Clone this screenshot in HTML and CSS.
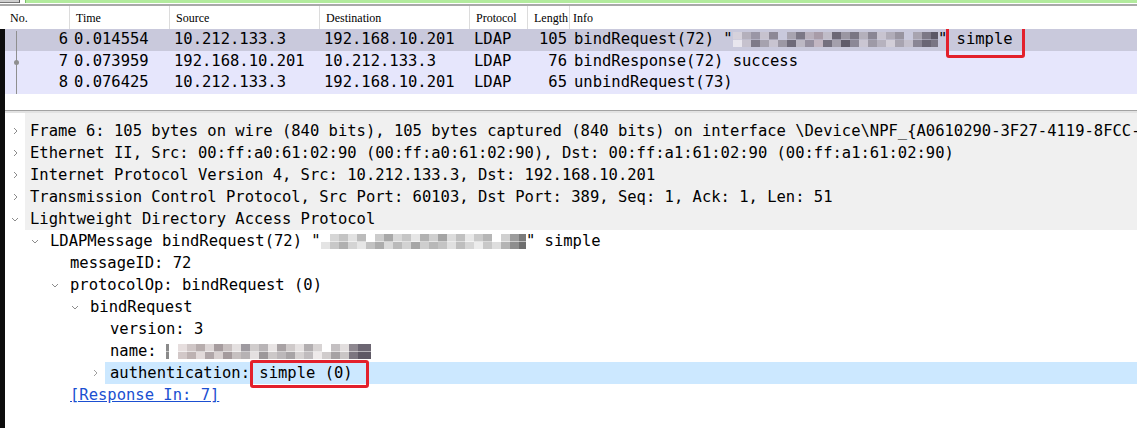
FILE: index.html
```html
<!DOCTYPE html>
<html>
<head>
<meta charset="utf-8">
<title>Wireshark LDAP</title>
<link rel="stylesheet" href="styles.css">
</head>
<body>
<div class="filterbar"><span class="fb-btn"></span><span class="fb-input"></span></div>
<div class="phead">
  <div class="hc">No.</div>
  <div class="hc">Time</div>
  <div class="hc">Source</div>
  <div class="hc">Destination</div>
  <div class="hc">Protocol</div>
  <div class="hc">Length</div>
  <div class="hc last">Info</div>
</div>
<div class="main">
  <div class="plist">
    <div class="prow sel">
      <span class="c-no">6</span><span class="c-time">0.014554</span><span class="c-src">10.212.133.3</span><span class="c-dst">192.168.10.201</span><span class="c-proto">LDAP</span><span class="c-len">105</span><span class="c-info">bindRequest(72) "<span class="redact r1"></span>" <span class="hl hl-a">simple</span></span>
    </div>
    <div class="prow">
      <span class="c-no">7</span><span class="c-time">0.073959</span><span class="c-src">192.168.10.201</span><span class="c-dst">10.212.133.3</span><span class="c-proto">LDAP</span><span class="c-len">76</span><span class="c-info">bindResponse(72) success</span>
    </div>
    <div class="prow">
      <span class="c-no">8</span><span class="c-time">0.076425</span><span class="c-src">10.212.133.3</span><span class="c-dst">192.168.10.201</span><span class="c-proto">LDAP</span><span class="c-len">65</span><span class="c-info">unbindRequest(73)</span>
    </div>
    <div class="relline"><span class="reldot"></span></div>
  </div>
  <div class="splitter"></div>
  <div class="tree">
    <div class="tgroup">
      <div class="trow l0"><span class="br"><span class="tog"><svg width="8" height="8" viewBox="0 0 8 8"><polyline points="3,1 6,4 3,7" fill="none" stroke="#8c8c8c" stroke-width="1"/></svg></span></span><span class="item">Frame 6: 105 bytes on wire (840 bits), 105 bytes captured (840 bits) on interface \Device\NPF_{A0610290-3F27-4119-8FCC-</span></div>
      <div class="trow l0"><span class="br"><span class="tog"><svg width="8" height="8" viewBox="0 0 8 8"><polyline points="3,1 6,4 3,7" fill="none" stroke="#8c8c8c" stroke-width="1"/></svg></span></span><span class="item">Ethernet II, Src: 00:ff:a0:61:02:90 (00:ff:a0:61:02:90), Dst: 00:ff:a1:61:02:90 (00:ff:a1:61:02:90)</span></div>
      <div class="trow l0"><span class="br"><span class="tog"><svg width="8" height="8" viewBox="0 0 8 8"><polyline points="3,1 6,4 3,7" fill="none" stroke="#8c8c8c" stroke-width="1"/></svg></span></span><span class="item">Internet Protocol Version 4, Src: 10.212.133.3, Dst: 192.168.10.201</span></div>
      <div class="trow l0"><span class="br"><span class="tog"><svg width="8" height="8" viewBox="0 0 8 8"><polyline points="3,1 6,4 3,7" fill="none" stroke="#8c8c8c" stroke-width="1"/></svg></span></span><span class="item">Transmission Control Protocol, Src Port: 60103, Dst Port: 389, Seq: 1, Ack: 1, Len: 51</span></div>
      <div class="trow l0"><span class="br"><span class="tog"><svg width="8" height="8" viewBox="0 0 8 8"><polyline points="1,3 4,6 7,3" fill="none" stroke="#8c8c8c" stroke-width="1"/></svg></span></span><span class="item">Lightweight Directory Access Protocol</span></div>
    </div>
    <div class="trow l1"><span class="br"><span class="tog"><svg width="8" height="8" viewBox="0 0 8 8"><polyline points="1,3 4,6 7,3" fill="none" stroke="#8c8c8c" stroke-width="1"/></svg></span></span><span class="item">LDAPMessage bindRequest(72) "<span class="redact r2"></span>" simple</span></div>
    <div class="trow l2"><span class="br"></span><span class="item">messageID: 72</span></div>
    <div class="trow l2"><span class="br"><span class="tog"><svg width="8" height="8" viewBox="0 0 8 8"><polyline points="1,3 4,6 7,3" fill="none" stroke="#8c8c8c" stroke-width="1"/></svg></span></span><span class="item">protocolOp: bindRequest (0)</span></div>
    <div class="trow l3"><span class="br"><span class="tog"><svg width="8" height="8" viewBox="0 0 8 8"><polyline points="1,3 4,6 7,3" fill="none" stroke="#8c8c8c" stroke-width="1"/></svg></span></span><span class="item">bindRequest</span></div>
    <div class="trow l4"><span class="br"></span><span class="item">version: 3</span></div>
    <div class="trow l4"><span class="br"></span><span class="item">name: <span class="redact r3"></span></span></div>
    <div class="trow l4 tsel"><span class="br"><span class="tog"><svg width="8" height="8" viewBox="0 0 8 8"><polyline points="3,1 6,4 3,7" fill="none" stroke="#a0a0a0" stroke-width="1"/></svg></span></span><span class="item">authentication: <span class="hl hl-b">simple (0)</span></span></div>
    <div class="trow l2"><span class="br"></span><span class="item"><a class="link">[Response In: 7]</a></span></div>
  </div>
</div>
</body>
</html>
```

FILE: styles.css
```css
* {
  box-sizing: border-box;
  margin: 0;
  padding: 0;
}

html, body {
  width: 1137px;
  height: 428px;
  overflow: hidden;
  background: #ffffff;
}

body {
  font-family: "DejaVu Sans Mono", monospace;
  font-size: 15.5px;
  color: #000000;
}

/* display filter bar remnant */
.filterbar {
  display: flex;
  height: 6px;
  border-bottom: 2px solid #a9a9a9;
}

.fb-btn {
  width: 20px;
  height: 3px;
  background: #cfcfcf;
  border-right: 1px solid #555;
  border-bottom: 1px solid #777;
}

.fb-input {
  flex: 1;
  height: 3px;
  margin-left: 5px;
  background: #b2eb9d;
  border-left: 1px solid #7bbf6a;
}

/* packet list header */
.phead {
  display: grid;
  grid-template-columns: 70px 100px 150px 150px 58px 42px 1fr;
  height: 23px;
  font-family: "Liberation Serif", serif;
  font-size: 12px;
  line-height: 24px;
  color: #000;
}

.hc {
  padding-left: 6px;
  border-right: 1px solid #dcdcdc;
  white-space: nowrap;
  overflow: hidden;
}

.hc:first-child {
  padding-left: 10px;
}

.hc.last {
  border-right: none;
  padding-left: 3px;
}

.main {
  border-left: 5px solid #0d0d0d;
  height: 399px;
  overflow: hidden;
}

/* packet list */
.plist {
  position: relative;
  height: 81px;
}

.prow {
  display: grid;
  grid-template-columns: 65px 100px 150px 150px 58px 43px 1fr;
  height: 21.7px;
  line-height: 21.7px;
  background: #e6e6fc;
  white-space: pre;
}

.prow.sel {
  background: #c9c9dc;
}

.c-no {
  text-align: right;
  padding-right: 2px;
}

.c-time,
.c-src,
.c-dst,
.c-proto {
  padding-left: 4px;
}

.c-len {
  text-align: right;
  padding-right: 4px;
}

.c-info {
  padding-left: 3px;
}

.relline {
  position: absolute;
  left: 11px;
  top: 2px;
  width: 1px;
  height: 63px;
  background: #8f8f8f;
}

.reldot {
  position: absolute;
  left: -2px;
  top: 29px;
  width: 5px;
  height: 5px;
  border-radius: 50%;
  background: #8f8f8f;
}

.splitter {
  height: 3px;
  border-top: 1px solid #a2a2a2;
  background: #e2e2e2;
}

/* detail tree */
.tgroup {
  padding-top: 7px;
  background: linear-gradient(to right, transparent 20px, #f0f0f0 20px);
}

.trow {
  display: flex;
  height: 22px;
  line-height: 22px;
  white-space: pre;
}

.br {
  display: flex;
  justify-content: flex-end;
  flex: none;
}

.l0 .br { width: 20px; }
.l1 .br { width: 40px; }
.l2 .br { width: 60px; }
.l3 .br { width: 80px; }
.l4 .br { width: 100px; }

.tog {
  width: 20px;
  display: flex;
  align-items: center;
  justify-content: center;
}

.item {
  flex: 1;
  padding-left: 5px;
}

.tsel .item {
  background: #cce8ff;
}

.link {
  color: #1b4fd1;
  text-decoration: underline;
}

/* red annotation boxes */
.hl {
  position: relative;
}

.hl::after {
  content: "";
  position: absolute;
  border: 3px solid #e3202b;
  border-radius: 3px;
}

.hl-a::after {
  top: -4px;
  bottom: -10px;
  left: -11px;
  right: -12px;
}

.hl-b::after {
  top: -4px;
  bottom: -6px;
  left: -9px;
  right: -16px;
}

/* pixelated redactions */
.redact {
  display: inline-block;
  width: 22ch;
  height: 15px;
  vertical-align: -3px;
  background-repeat: no-repeat;
  background-size: 100% 50%, 100% 50%;
  background-position: top left, bottom left;
}

.r1 {
  background-image:
    linear-gradient(90deg,
      #d6d2dc 0 9px, #b4b0bc 9px 18px, #9a96a6 18px 27px, #c6c2ce 27px 36px,
      #8c8896 36px 45px, transparent 45px 54px, #a8a4b0 54px 63px, #7c7886 63px 72px,
      #b8b0bc 72px 81px, #a89ca8 81px 90px, #c0bcc8 90px 99px, #6c6876 99px 108px,
      #9a96a2 108px 117px, #7a7684 117px 126px, #b4b0bc 126px 135px, #8a8694 135px 144px,
      #c8c4d0 144px 153px, #b0acb8 153px 162px, #9894a0 162px 171px, transparent 171px 180px,
      #a8a4b0 180px 189px, #7c7886 189px 198px, #5c5866 198px 206px),
    linear-gradient(90deg,
      #e8e6ee 0 9px, #c6c2ce 9px 18px, #7e7a88 18px 27px, #a6a2ae 27px 36px,
      #c8c4d0 36px 45px, #9c98a4 45px 54px, #6e6a78 54px 63px, #bcb8c4 63px 72px,
      #9690a0 72px 81px, #c2b6c2 81px 90px, #74707e 90px 99px, #a4a0ac 99px 108px,
      #605c6a 108px 117px, #8c8896 117px 126px, #cac6d2 126px 135px, #9e9aa6 135px 144px,
      #b6b2be 144px 153px, #d2ced8 153px 162px, #a8a4b0 162px 171px, #c4c0cc 171px 180px,
      #8a8694 180px 189px, #6a6674 189px 198px, #7a7684 198px 206px);
}

.r2 {
  background-image:
    linear-gradient(90deg,
      transparent 0 9px, #d6d6d6 9px 18px, #c4c4c4 18px 27px, #e2e2e2 27px 36px,
      #bcbcbc 36px 45px, transparent 45px 54px, #cccccc 54px 63px, #a8a8a8 63px 72px,
      #d8d8d8 72px 81px, #c6c6c6 81px 90px, #e6e6e6 90px 99px, #b2b2b2 99px 108px,
      #cfcfcf 108px 117px, #a4a4a4 117px 126px, #dcdcdc 126px 135px, #c0c0c0 135px 144px,
      #e8e8e8 144px 153px, #cacaca 153px 162px, #b6b6b6 162px 171px, transparent 171px 180px,
      #d0d0d0 180px 189px, #9c9c9c 189px 198px, #7a7a7a 198px 206px),
    linear-gradient(90deg,
      #e4e4e4 0 9px, #c8c8c8 9px 18px, #b0b0b0 18px 27px, #d4d4d4 27px 36px,
      #e6e6e6 36px 45px, #c2c2c2 45px 54px, #acacac 54px 63px, #dadada 63px 72px,
      #bababa 72px 81px, #d2d2d2 81px 90px, #a6a6a6 90px 99px, #cecece 99px 108px,
      #b8b8b8 108px 117px, #c4c4c4 117px 126px, #e0e0e0 126px 135px, #bebebe 135px 144px,
      #d6d6d6 144px 153px, #ececec 153px 162px, #c8c8c8 162px 171px, #dedede 171px 180px,
      #b4b4b4 180px 189px, #8e8e8e 189px 198px, #6e6e6e 198px 206px);
}

.r3 {
  background-image:
    linear-gradient(90deg,
      #8a8a8a 0 3px, transparent 3px 12px, #e6dede 12px 21px, #cfc6c6 21px 30px,
      #b7adad 30px 39px, #ddd6d6 39px 48px, #a69c9e 48px 57px, #c8c0c0 57px 66px,
      #e4e0e0 66px 75px, #9e9aa0 75px 84px, #d0cccc 84px 93px, #b8b4b6 93px 102px,
      #e8e4e4 102px 111px, #a8a2a4 111px 120px, #cfcaca 120px 129px, #e6e2e2 129px 138px,
      #b2aeb0 138px 147px, #d8d4d4 147px 156px, transparent 156px 165px, #c4c0c2 165px 174px,
      #e2dede 174px 183px, #8e8890 183px 192px, #6c6672 192px 206px),
    linear-gradient(90deg,
      #8a8a8a 0 3px, transparent 3px 12px, #d2c8c8 12px 21px, #bdb2b2 21px 30px,
      #e2dada 30px 39px, #b0a6a8 39px 48px, #d8d0d0 48px 57px, #a49a9c 57px 66px,
      #c6c0c0 66px 75px, #b6b2b4 75px 84px, #e4e0e0 84px 93px, #9c989a 93px 102px,
      #ccc8c8 102px 111px, #bcb8ba 111px 120px, #a8a4a6 120px 129px, #d6d2d2 129px 138px,
      #c0bcbe 138px 147px, #eeeaea 147px 156px, #d0cccc 156px 165px, #a6a2a4 165px 174px,
      #cac6c6 174px 183px, #7c7680 183px 192px, #5e5864 192px 206px);
}
```
